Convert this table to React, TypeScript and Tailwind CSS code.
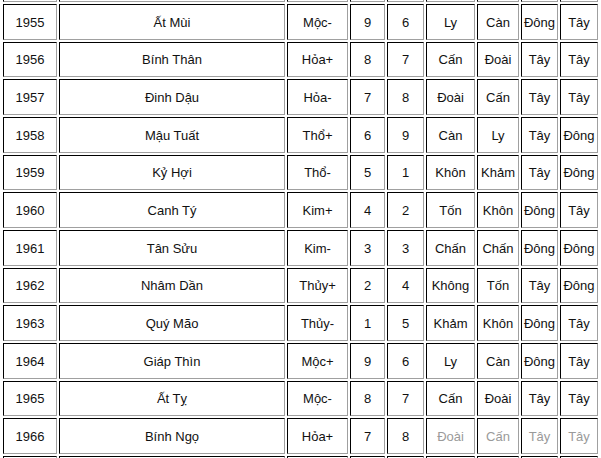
import React from "react";

const widthClasses = [
  "w-[54px]",
  "w-[226px]",
  "w-[61px]",
  "w-[35px]",
  "w-[37px]",
  "w-[49px]",
  "w-[42px]",
  "w-[37px]",
  "w-[38px]",
];

const rows: string[][] = [
  ["1955", "Ất Mùi", "Mộc-", "9", "6", "Ly", "Càn", "Đông", "Tây"],
  ["1956", "Bính Thân", "Hỏa+", "8", "7", "Cấn", "Đoài", "Tây", "Tây"],
  ["1957", "Đinh Dậu", "Hỏa-", "7", "8", "Đoài", "Cấn", "Tây", "Tây"],
  ["1958", "Mậu Tuất", "Thổ+", "6", "9", "Càn", "Ly", "Tây", "Đông"],
  ["1959", "Kỷ Hợi", "Thổ-", "5", "1", "Khôn", "Khảm", "Tây", "Đông"],
  ["1960", "Canh Tý", "Kim+", "4", "2", "Tốn", "Khôn", "Đông", "Tây"],
  ["1961", "Tân Sửu", "Kim-", "3", "3", "Chấn", "Chấn", "Đông", "Đông"],
  ["1962", "Nhâm Dần", "Thủy+", "2", "4", "Không", "Tốn", "Tây", "Đông"],
  ["1963", "Quý Mão", "Thủy-", "1", "5", "Khảm", "Khôn", "Đông", "Tây"],
  ["1964", "Giáp Thìn", "Mộc+", "9", "6", "Ly", "Càn", "Đông", "Tây"],
  ["1965", "Ất Tỵ", "Mộc-", "8", "7", "Cấn", "Đoài", "Tây", "Tây"],
  ["1966", "Bính Ngọ", "Hỏa+", "7", "8", "Đoài", "Cấn", "Tây", "Tây"],
];

const heightClasses = [
  "h-[36px]",
  "h-[35px]",
  "h-[36px]",
  "h-[36px]",
  "h-[35px]",
  "h-[36px]",
  "h-[36px]",
  "h-[35px]",
  "h-[36px]",
  "h-[36px]",
  "h-[35px]",
  "h-[36px]",
];

export default function App() {
  return (
    <div
      className="h-[458px] w-[601px] overflow-hidden bg-white pl-[3px]"
      style={{ fontFamily: '"Liberation Sans", Arial, sans-serif' }}
    >
      <div className="flex flex-col gap-[2px]">
        {/* cut-off previous row */}
        <div className="flex gap-[2px]">
          {widthClasses.map((w, i) => (
            <div
              key={i}
              className={`${w} h-[2px] shrink-0 border-l border-r border-b border-l-black border-r-[#a0a0a0] border-b-[#a0a0a0]`}
            />
          ))}
        </div>
        {rows.map((r, ri) => (
          <div key={ri} className="flex gap-[2px]">
            {r.map((c, ci) => {
              const faded = ri === 11 && ci >= 5;
              return (
                <div
                  key={ci}
                  className={`${widthClasses[ci]} ${heightClasses[ri]} flex shrink-0 items-center justify-center whitespace-nowrap border border-t-black border-l-black border-r-[#a0a0a0] border-b-[#a0a0a0] text-[13px] leading-none ${
                    faded ? "text-[#9a9a9a]" : "text-[#111]"
                  }`}
                >
                  {c}
                </div>
              );
            })}
          </div>
        ))}
        {/* next row, cut off by the bottom edge */}
        <div className="flex gap-[2px]">
          {widthClasses.map((w, i) => (
            <div
              key={i}
              className={`${w} h-[36px] shrink-0 border border-t-black border-l-black border-r-[#a0a0a0] border-b-[#a0a0a0]`}
            />
          ))}
        </div>
      </div>
    </div>
  );
}
